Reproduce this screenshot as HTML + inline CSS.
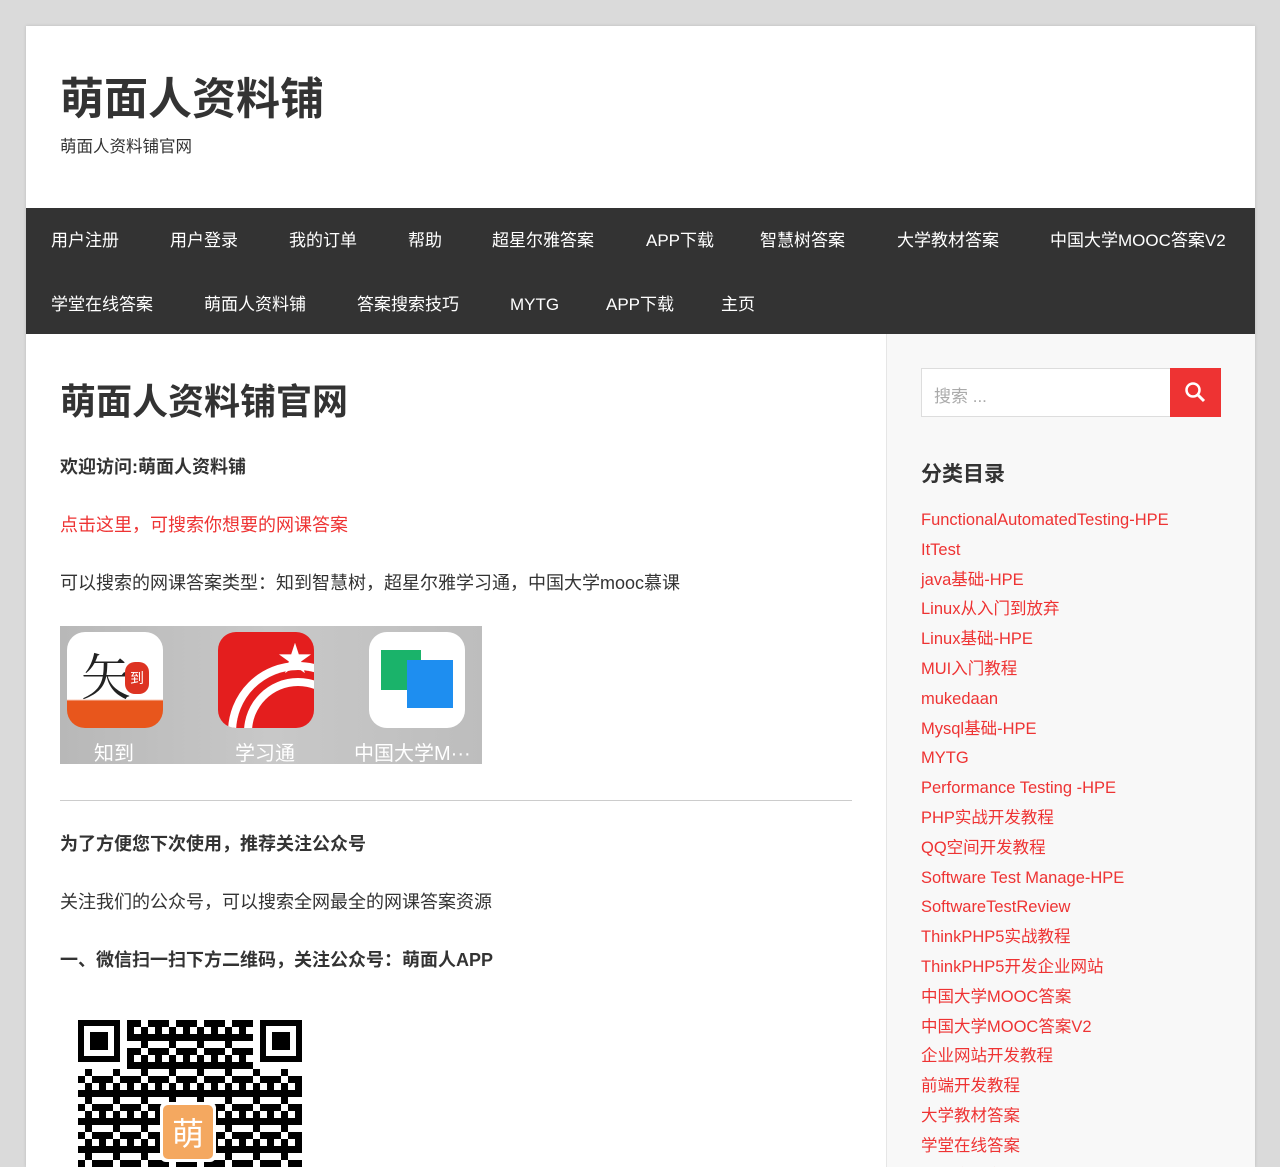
<!DOCTYPE html>
<html style="overflow:hidden;height:1167px"><head><meta charset="utf-8"><style>
*{margin:0;padding:0;box-sizing:border-box}
body{background:#dadada;font-family:"Liberation Sans","Noto Sans CJK SC",sans-serif;color:#333;width:1280px;height:1167px;overflow:hidden;position:relative}
#wrap{position:absolute;left:26px;top:26px;width:1229px;height:1141px;background:#fff;box-shadow:0 0 3px #bbb;overflow:hidden}
.title{position:absolute;left:34px;top:46px;font-size:44px;font-weight:bold;color:#333;line-height:56px}
.desc{position:absolute;left:34px;top:110px;font-size:16.5px;line-height:22px}
nav{position:absolute;left:0;top:182px;width:1229px;height:126px;background:#333}
nav span{position:absolute;color:#fff;font-size:17px;line-height:20px}
h1{position:absolute;left:34px;top:352px;font-size:36px;font-weight:bold;line-height:48px}
.p{position:absolute;left:34px;font-size:18px;line-height:24px;white-space:nowrap}
.b{font-weight:bold}
.r{color:#e33}
#side{position:absolute;left:860px;top:308px;width:369px;height:860px;background:#f8f8f8;border-left:1px solid #e6e6e6}
.search{position:absolute;left:34px;top:34px;width:300px;height:49px;border:1px solid #ddd;background:#fff}
.search span{position:absolute;left:12px;top:13px;color:#aaa;font-size:17px}
.sbtn{position:absolute;left:283px;top:34px;width:51px;height:49px;background:#e33}
.wt{position:absolute;left:34px;top:124px;font-size:21px;font-weight:bold}
.list{position:absolute;left:34px;top:172px;font-size:16.5px;line-height:29.8px;color:#e33}
</style></head><body>
<div id="wrap">
<div class="title">萌面人资料铺</div>
<div class="desc">萌面人资料铺官网</div>
<nav>
<span style="left:25px;top:23px">用户注册</span><span style="left:144px;top:23px">用户登录</span><span style="left:263px;top:23px">我的订单</span><span style="left:382px;top:23px">帮助</span><span style="left:466px;top:23px">超星尔雅答案</span><span style="left:620px;top:23px">APP下载</span><span style="left:734px;top:23px">智慧树答案</span><span style="left:871px;top:23px">大学教材答案</span><span style="left:1024px;top:23px">中国大学MOOC答案V2</span>
<span style="left:25px;top:87px">学堂在线答案</span><span style="left:178px;top:87px">萌面人资料铺</span><span style="left:331px;top:87px">答案搜索技巧</span><span style="left:484px;top:87px">MYTG</span><span style="left:580px;top:87px">APP下载</span><span style="left:695px;top:87px">主页</span>
</nav>
<h1 style="top:352px">萌面人资料铺官网</h1>
<div class="p b" style="top:429px">欢迎访问:萌面人资料铺</div>
<div class="p r" style="top:487px">点击这里，可搜索你想要的网课答案</div>
<div class="p" style="top:545px">可以搜索的网课答案类型：知到智慧树，超星尔雅学习通，中国大学mooc慕课</div>
<div style="position:absolute;left:34px;top:600px;width:422px;height:138px;background:linear-gradient(90deg,#b8b8b8,#c8c8c8 50%,#bdbdbd)">
 <div style="position:absolute;left:7px;top:6px;width:96px;height:96px;border-radius:18px;background:linear-gradient(#fff 70%,#e8561c 72%)"><span style="position:absolute;left:14px;top:6px;font-size:50px;font-family:'Noto Serif CJK SC',serif;color:#222">矢</span><span style="position:absolute;left:58px;top:30px;width:24px;height:32px;border-radius:10px;background:#d32;color:#fff;font-size:14px;text-align:center;line-height:32px">到</span></div>
 <div style="position:absolute;left:158px;top:6px;width:96px;height:96px;border-radius:18px;background:#e41e1e;overflow:hidden"><div style="position:absolute;left:10px;top:30px;width:140px;height:140px;border-radius:50%;border:8px solid #fff;box-shadow:inset 0 0 0 8px #e41e1e,inset 0 0 0 16px #fff"></div><span style="position:absolute;left:60px;top:0;color:#fff;font-size:34px">★</span></div>
 <div style="position:absolute;left:309px;top:6px;width:96px;height:96px;border-radius:18px;background:#fff"><div style="position:absolute;left:12px;top:18px;width:40px;height:40px;background:#1ab36a"></div><div style="position:absolute;left:38px;top:28px;width:46px;height:48px;background:#1e8ef0"></div></div>
 <span style="position:absolute;left:34px;top:111px;color:#fff;font-size:20px">知到</span>
 <span style="position:absolute;left:175px;top:111px;color:#fff;font-size:20px">学习通</span>
 <span style="position:absolute;left:294px;top:111px;color:#fff;font-size:20px">中国大学M···</span>
</div>
<div style="position:absolute;left:34px;top:774px;width:792px;height:1px;background:#ccc"></div>
<div class="p b" style="top:806px">为了方便您下次使用，推荐关注公众号</div>
<div class="p" style="top:864px">关注我们的公众号，可以搜索全网最全的网课答案资源</div>
<div class="p b" style="top:922px">一、微信扫一扫下方二维码，关注公众号：萌面人APP</div>
<svg style="position:absolute;left:52px;top:994px" width="224" height="170" viewBox="0 0 224 170">
<defs><pattern id="q" width="28" height="28" patternUnits="userSpaceOnUse"><rect width="28" height="28" fill="#fff"/><rect x="0" y="0" width="7" height="7"/><rect x="14" y="0" width="14" height="7"/><rect x="7" y="7" width="7" height="7"/><rect x="21" y="7" width="7" height="14"/><rect x="0" y="14" width="14" height="7"/><rect x="7" y="21" width="7" height="7"/><rect x="14" y="14" width="7" height="7"/></pattern></defs>
<rect width="224" height="170" fill="url(#q)"/>
<g><rect x="0" y="0" width="49" height="49" fill="#fff"/><rect x="0" y="0" width="42" height="42"/><rect x="6" y="6" width="30" height="30" fill="#fff"/><rect x="12" y="12" width="18" height="18"/></g>
<g><rect x="175" y="0" width="49" height="49" fill="#fff"/><rect x="182" y="0" width="42" height="42"/><rect x="188" y="6" width="30" height="30" fill="#fff"/><rect x="194" y="12" width="18" height="18"/></g>
<rect x="82" y="82" width="56" height="60" rx="6" fill="#fff"/><rect x="85" y="85" width="50" height="54" rx="5" fill="#f4a860"/>
<text x="110" y="125" text-anchor="middle" font-size="32" fill="#fff" font-family="Noto Sans CJK SC,sans-serif">萌</text>
</svg>
<div id="side">
<div class="search"><span>搜索 ...</span></div>
<div class="sbtn"><svg width="51" height="49"><circle cx="23" cy="22" r="6.5" fill="none" stroke="#fff" stroke-width="2.5"/><line x1="28" y1="27" x2="34" y2="33" stroke="#fff" stroke-width="3"/></svg></div>
<div class="wt">分类目录</div>
<div class="list">FunctionalAutomatedTesting-HPE<br>ItTest<br>java基础-HPE<br>Linux从入门到放弃<br>Linux基础-HPE<br>MUI入门教程<br>mukedaan<br>Mysql基础-HPE<br>MYTG<br>Performance Testing -HPE<br>PHP实战开发教程<br>QQ空间开发教程<br>Software Test Manage-HPE<br>SoftwareTestReview<br>ThinkPHP5实战教程<br>ThinkPHP5开发企业网站<br>中国大学MOOC答案<br>中国大学MOOC答案V2<br>企业网站开发教程<br>前端开发教程<br>大学教材答案<br>学堂在线答案<br>小程序开发</div>
</div>
</div>
</body></html>
